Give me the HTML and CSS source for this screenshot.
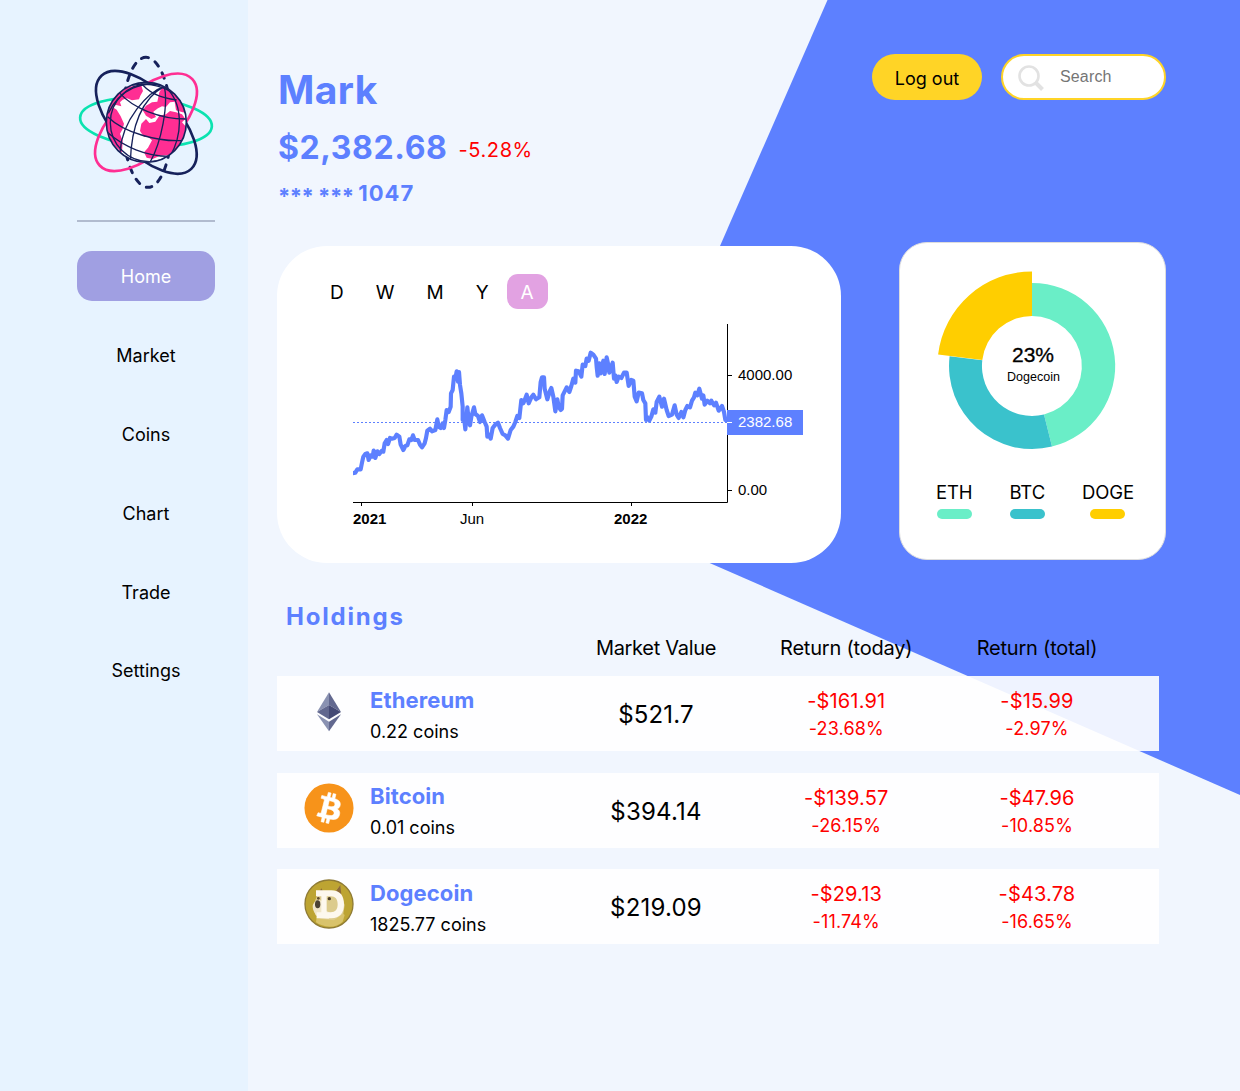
FILE: index.html
```html
<!DOCTYPE html>
<html lang="en">
<head>
<meta charset="utf-8">
<title>Portfolio</title>
<link rel="stylesheet" href="styles.css">
</head>
<body>
<div class="backdrop"></div>
<div class="app">
  <aside class="sidebar">
    <svg class="logo" viewBox="0 0 450 450" fill="none">
      <defs><clipPath id="globe"><circle cx="229" cy="232" r="119"/></clipPath></defs>
      <ellipse cx="228" cy="231" rx="198" ry="72" transform="rotate(4 228 231)" stroke="#0be3b0" stroke-width="8"/>
      <ellipse cx="231" cy="232" rx="195" ry="73" transform="rotate(-91 231 232)" stroke="#16215b" stroke-width="9" stroke-linecap="round" stroke-dasharray="17 23" stroke-dashoffset="9"/>
      <ellipse cx="228" cy="232" rx="190" ry="92" transform="rotate(-43 228 232)" stroke="#ff2e93" stroke-width="8"/>
      <ellipse cx="229" cy="232" rx="194" ry="94" transform="rotate(46 229 232)" stroke="#16215b" stroke-width="8"/>
      <circle cx="229" cy="232" r="121" fill="#fff"/>
      <g clip-path="url(#globe)">
        <path fill="#ff2e93" d="M110 190C130 145 170 118 214 122L219 138 211 152 207 163 186 166 171 160 158 164 150 172 154 184 139 180 128 183 118 196ZM108 188 124 184 140 194 152 214 162 236 158 252 150 266 158 288 156 322C118 296 98 240 108 188ZM268 142 286 112 340 150 352 204 338 202 318 196 314 170 300 172 288 186 276 184 264 190 250 200 258 216 244 222 228 212 218 196 228 182 246 172 262 170ZM214 236 228 222 238 234 256 230 268 212 288 208 300 198 318 202 336 208 346 222 336 232 352 250 346 284 316 314 300 330 270 332 248 342 230 338 222 322 234 308 246 286 234 276 222 276 210 258Z"/>
        <g stroke="#16215b" stroke-width="4">
          <path d="M283 124C215 160 184 245 181 350M283 124C235 140 155 225 150 322M283 124C295 180 275 290 240 352M283 124C340 170 340 265 300 335M283 124C220 105 150 130 115 205M283 124C345 145 360 220 345 275"/>
          <path d="M212 112C232 140 265 158 320 165M150 145C190 190 270 222 350 222M113 215C160 262 265 293 346 286M112 262C160 305 230 335 300 334M180 122C220 112 270 118 310 145"/>
          <circle cx="238" cy="233" r="117"/>
        </g>
      </g>
      <circle cx="229" cy="232" r="120" stroke="#16215b" stroke-width="5"/>
    </svg>
    <hr class="rule">
    <nav class="nav">
      <a class="nav-item active">Home</a>
      <a class="nav-item">Market</a>
      <a class="nav-item">Coins</a>
      <a class="nav-item">Chart</a>
      <a class="nav-item">Trade</a>
      <a class="nav-item">Settings</a>
    </nav>
  </aside>

  <main class="main">
    <header class="header">
      <div class="account">
        <h1 class="name">Mark</h1>
        <div class="balance"><span class="amount">$2,382.68</span><span class="change">-5.28%</span></div>
        <div class="number"><span class="mask">*** *** </span>1047</div>
      </div>
      <div class="actions">
        <button class="logout">Log out</button>
        <div class="search">
          <svg width="27" height="27" viewBox="0 0 27 27" fill="none" stroke="#e2e2e2"><circle cx="11" cy="12" r="9.5" stroke-width="2.6"/><path d="M17.500 18.500 24.500 25.500" stroke-width="4"/></svg>
          <span class="placeholder">Search</span>
        </div>
      </div>
    </header>

    <section class="cards">
      <div class="chart-card">
        <div class="tabs">
          <span class="tab">D</span><span class="tab">W</span><span class="tab">M</span><span class="tab">Y</span><span class="tab selected">A</span>
        </div>
        <svg class="chart" width="480" height="230" viewBox="0 0 480 230">
          <path d="M13 112.500H387" stroke="#5d80ff" stroke-dasharray="2 2"/>
          <path d="M13 192.500H387.500V14M21.500 192V196M132.500 192V196M291.500 192V196M387 65.500H392M387 180.500H392" fill="none" stroke="#000"/>
          <svg x="13" y="0" width="374" height="200" viewBox="39 0 1122 600">
            <path fill="none" stroke="#5d80ff" stroke-width="12.500" stroke-linejoin="round" d="M36 490 46 488 52 478 62 478 66 458 70 440 76 432 82 430 86 450 92 436 98 440 101 422 106 444 112 424 118 432 126 422 130 425 134 400 140 390 144 402 150 384 156 386 164 384 170 374 178 380 182 404 190 420 196 408 202 406 208 388 214 390 219 376 224 390 234 390 240 404 246 412 254 400 258 384 262 362 270 356 276 364 286 360 292 328 296 350 302 354 308 340 312 354 316 330 320 300 326 306 332 290 333 250 338 240 342 200 346 206 350 184 354 215 357 186 360 225 364 250 368 290 368 330 372 320 376 358 382 292 386 330 390 346 394 320 402 292 406 312 414 318 420 336 426 316 434 336 440 350 442 380 447 374 452 386 458 354 466 344 474 338 480 354 488 372 496 376 504 386 512 360 520 350 526 336 532 318 538 324 544 270 550 280 554 270 560 254 566 280 574 262 580 254 588 268 598 262 602 216 606 202 612 202 614 236 622 268 630 242 634 234 640 260 646 304 652 268 656 290 662 300 666 296 668 256 674 244 680 232 688 246 694 228 700 206 706 218 708 182 716 184 724 200 728 164 736 168 740 146 746 152 752 128 760 134 768 146 770 170 773 197 778 160 782 190 786 170 790 152 794 192 800 142 804 160 808 188 818 158 822 206 826 196 830 216 836 200 844 204 852 188 860 188 866 228 874 210 880 212 884 260 890 274 896 248 906 250 910 270 916 280 918 330 923 322 928 332 934 320 940 298 946 308 950 276 958 260 966 290 972 266 980 300 986 318 996 314 1004 286 1010 314 1016 324 1024 306 1030 322 1036 300 1042 288 1050 292 1056 272 1062 262 1066 248 1072 256 1078 236 1086 266 1090 256 1094 284 1102 272 1110 280 1114 272 1122 286 1128 278 1136 302 1146 288 1152 306 1156 330 1170 334"/>
          </svg>
          <path d="M387 100H463V125H387Z" fill="#5d80ff"/>
          <path d="M387 112.500H392" stroke="#fff"/>
          <g class="tick">
            <text x="398" y="70">4000.00</text>
            <text x="398" y="185">0.00</text>
            <text x="398" y="117" fill="#fff">2382.68</text>
            <text x="132" y="214" text-anchor="middle">Jun</text>
            <text class="year" x="13" y="214">2021</text>
            <text class="year" x="274" y="214">2022</text>
          </g>
        </svg>
      </div>

      <div class="mix-card">
        <svg class="donut" width="190" height="190" viewBox="-95 -95 190 190">
          <path fill="#6aeec7" d="M0-83A83 83 0 0 1 20 80.600L12 48.500A50 50 0 0 0 0-50Z"/>
          <path fill="#3ac2cc" d="M20 80.600A83 83 0 0 1-82.400-9.700L-49.700-5.800A50 50 0 0 0 12 48.500Z"/>
          <path fill="#ffce00" d="M-93.900-11.500A94.600 94.600 0 0 1 0-94.600V-50A50 50 0 0 0-49.700-6Z"/>
          <text class="share" x="1" y="-4" text-anchor="middle">23%</text>
          <text class="coin" x="1.500" y="15" text-anchor="middle">Dogecoin</text>
        </svg>
        <div class="legend">
          <div class="key eth">ETH</div>
          <div class="key btc">BTC</div>
          <div class="key doge">DOGE</div>
        </div>
      </div>
    </section>

    <section class="holdings">
      <h2 class="title">Holdings</h2>
      <div class="columns">
        <span class="heading mv">Market Value</span><span class="heading">Return (today)</span><span class="heading">Return (total)</span>
      </div>
      <div class="row">
        <svg class="icon" viewBox="0 0 150 150"><path fill="#8a92b2" d="M75 19 39 78 75 57Z"/><path fill="#62688f" d="M75 19 111 78 75 57Z"/><path fill="#62688f" d="M75 57 39 78 75 100Z"/><path fill="#454a75" d="M75 57 111 78 75 100Z"/><path fill="#8a92b2" d="M39 85 75 107V136Z"/><path fill="#62688f" d="M111 85 75 107V136Z"/></svg>
        <div class="coin-info"><div class="coin-name">Ethereum</div><div class="qty">0.22 coins</div></div>
        <div class="value">$521.7</div>
        <div class="return"><div class="money">-$161.91</div><div class="pct">-23.68%</div></div>
        <div class="return"><div class="money">-$15.99</div><div class="pct">-2.97%</div></div>
      </div>
      <div class="row">
        <svg class="icon" viewBox="0 0 32 32"><circle cx="16" cy="16" r="15.700" fill="#f7931a"/><path fill="#fff" stroke="#fff" stroke-width=".4" d="M23.189 14.02c.314-2.096-1.283-3.223-3.465-3.975l.708-2.84-1.728-.43-.69 2.765c-.454-.114-.92-.22-1.385-.326l.695-2.783L15.596 6l-.708 2.839c-.376-.086-.746-.17-1.104-.26l.002-.009-2.384-.595-.46 1.846s1.283.294 1.256.312c.7.175.826.638.805 1.006l-.806 3.235c.048.012.11.03.18.057l-.183-.045-1.13 4.532c-.086.212-.303.531-.793.41.018.025-1.256-.313-1.256-.313l-.858 1.978 2.25.561c.418.105.828.215 1.231.318l-.715 2.872 1.727.43.708-2.84c.472.127.93.245 1.378.357l-.706 2.828 1.728.43.715-2.866c2.948.558 5.164.333 6.097-2.333.752-2.146-.037-3.385-1.588-4.192 1.130-.26 1.980-1.003 2.207-2.538zm-3.950 5.538c-.533 2.147-4.148.986-5.320.695l.950-3.805c1.172.293 4.929.872 4.370 3.110zm.535-5.569c-.487 1.953-3.495.96-4.470.717l.860-3.450c.975.243 4.118.696 3.610 2.733z"/></svg>
        <div class="coin-info"><div class="coin-name">Bitcoin</div><div class="qty">0.01 coins</div></div>
        <div class="value">$394.14</div>
        <div class="return"><div class="money">-$139.57</div><div class="pct">-26.15%</div></div>
        <div class="return"><div class="money">-$47.96</div><div class="pct">-10.85%</div></div>
      </div>
      <div class="row">
        <svg class="icon" viewBox="0 0 150 150"><circle cx="75" cy="75" r="72" fill="#bda432" stroke="#8f7b35" stroke-width="4"/><path fill="#d9c36b" d="M38 112C55 100 110 92 122 108L116 128C95 150 55 145 36 130Z"/><path fill="#dccb8c" d="M28 78 40 48 50 32 60 42 92 40 108 20 112 48 122 78 118 104 90 124 50 120 34 108Z"/><path fill="#8d6a36" d="M46 38 52 28 60 42 46 50ZM94 38 109 18 112 46Z"/><path fill="#f0e6c8" d="M26 80C30 66 44 58 54 66L60 92 84 104 74 120 44 116C34 106 26 96 26 80Z"/><path fill="#fdf8ee" fill-rule="evenodd" d="M36 34H82C108 34 120 50 120 76S108 118 82 118H38V100H52V52H36ZM68 52V100H80C94 100 101 92 101 76S94 52 80 52Z"/><ellipse cx="41" cy="76" rx="8" ry="12" fill="#4b4234"/><circle cx="43" cy="58" r="4" fill="#5f4a2d"/><circle cx="76" cy="59" r="5" fill="#4b3d28"/></svg>
        <div class="coin-info"><div class="coin-name">Dogecoin</div><div class="qty">1825.77 coins</div></div>
        <div class="value">$219.09</div>
        <div class="return"><div class="money">-$29.13</div><div class="pct">-11.74%</div></div>
        <div class="return"><div class="money">-$43.78</div><div class="pct">-16.65%</div></div>
      </div>
    </section>
  </main>
</div>
</body>
</html>
```
FILE: styles.css
```css
* { box-sizing: border-box; }
body { margin: 0; background: #f1f6fe; color: #000; font-family: Inter, "Liberation Sans", sans-serif; }
h1, h2 { margin: 0; }
.backdrop { position: absolute; inset: 0; z-index: -1; height: 1091px; background: #5d80ff; clip-path: polygon(827.5px 0, 602px 516px, 1240px 795px, 1240px 0); }
.app { display: grid; grid-template-columns: 248px 1fr; height: 1091px; }

.sidebar { background: #e7f3ff; padding: 45px 33px 0 77px; }
.logo { display: block; width: 150px; height: 150px; margin-left: -7px; }
.rule { margin: 25px 0 29px; border: 0; height: 2px; background: #b1bbcf; }
.nav { display: flex; flex-direction: column; gap: 28.9px; }
.nav-item { height: 50px; line-height: 51px; border-radius: 15px; text-align: center; font-size: 18px; }
.active { background: #a09fe2; color: #fff; }

.main { padding: 54px 74px 0 29px; }
.header { display: flex; justify-content: space-between; height: 188px; }
.account { padding: 12px 0 0 1px; color: #5d80ff; font-weight: 700; }
.name { font-size: 39px; line-height: 48px; letter-spacing: .4px; }
.balance { display: flex; gap: 11px; margin-top: 12px; line-height: 44px; }
.amount { font-size: 32px; letter-spacing: .6px; }
.change { font-size: 20px; line-height: 48px; font-weight: 400; color: #f00; letter-spacing: .6px; }
.number { margin-top: 4px; font-size: 22px; line-height: 30px; letter-spacing: 1px; }
.mask { letter-spacing: -.5px; white-space: pre; vertical-align: -3px; }
.actions { display: flex; gap: 19px; }
.logout { width: 110px; height: 46px; border: 0; border-radius: 23px; padding: 3px 0 0; background: #ffd426; color: #000; font: 400 18px Inter, sans-serif; }
.search { display: flex; align-items: center; gap: 15px; width: 165px; height: 46px; padding-left: 15px; border: 2px solid #ffd426; border-radius: 23px; background: #fff; }
.placeholder { font: 16px "Liberation Sans", sans-serif; letter-spacing: .15px; color: #757575; }

.cards { display: flex; justify-content: space-between; align-items: flex-start; height: 358px; }
.chart-card { width: 564px; height: 317px; margin-top: 4px; padding-top: 28px; border-radius: 50px; background: #fff; }
.tabs { display: flex; gap: 4px; padding-left: 39px; }
.tab { padding: 0 14px; height: 35px; line-height: 37px; border-radius: 11px; font-size: 19px; }
.selected { background: #e2a2e2; color: #fff; }
.chart { display: block; margin: 1px 0 0 63px; }
.tick { font: 15px "Liberation Sans", sans-serif; }
.year { font-weight: 700; }

.mix-card { width: 267px; height: 318px; padding: 28px 31px 0 36px; border: 1px solid #ddd; border-radius: 28px; background: #fff; }
.donut { display: block; margin-left: 1px; }
.share { font: 21px "Liberation Sans", sans-serif; stroke: #000; stroke-width: .3px; }
.coin { font: 12.5px "Liberation Sans", sans-serif; }
.legend { display: flex; justify-content: space-between; margin-top: 19px; }
.key { display: flex; flex-direction: column; align-items: center; gap: 5px; font-size: 18.5px; line-height: 24px; letter-spacing: -.1px; }
.key::after { content: ""; width: 35px; height: 10px; border-radius: 5px; background: currentColor; }
.eth::after { background: #6aeec7; }
.btc::after { background: #3ac2cc; }
.doge::after { background: #ffce00; }

.title { padding-left: 9px; color: #5d80ff; font-size: 24px; line-height: 34px; letter-spacing: 1.8px; }
.columns, .row { display: grid; grid-template-columns: 28px 65px 191px 190px 190.5px 191px; width: 882px; }
.columns { margin: 0 0 14px; line-height: 28px; }
.heading { font-size: 20px; text-align: center; letter-spacing: -.2px; }
.mv { letter-spacing: -.3px; grid-column: 4; }
.row { height: 75px; margin-bottom: 21.5px; background: rgba(255, 255, 255, .9); }
.icon { grid-column: 2; width: 50px; height: 50px; margin: 10px 0 0 -1px; }
.coin-name { margin-top: 9.5px; color: #5d80ff; font-size: 22px; line-height: 28px; font-weight: 700; letter-spacing: .1px; }
.qty { margin-top: 6px; font-size: 18px; line-height: 24px; }
.value { font-size: 24px; line-height: 78px; text-align: center; letter-spacing: .2px; }
.return { color: #f00; text-align: center; letter-spacing: .15px; }
.money { margin-top: 11px; font-size: 20px; line-height: 28px; }
.pct { font-size: 18px; line-height: 27px; }
```
